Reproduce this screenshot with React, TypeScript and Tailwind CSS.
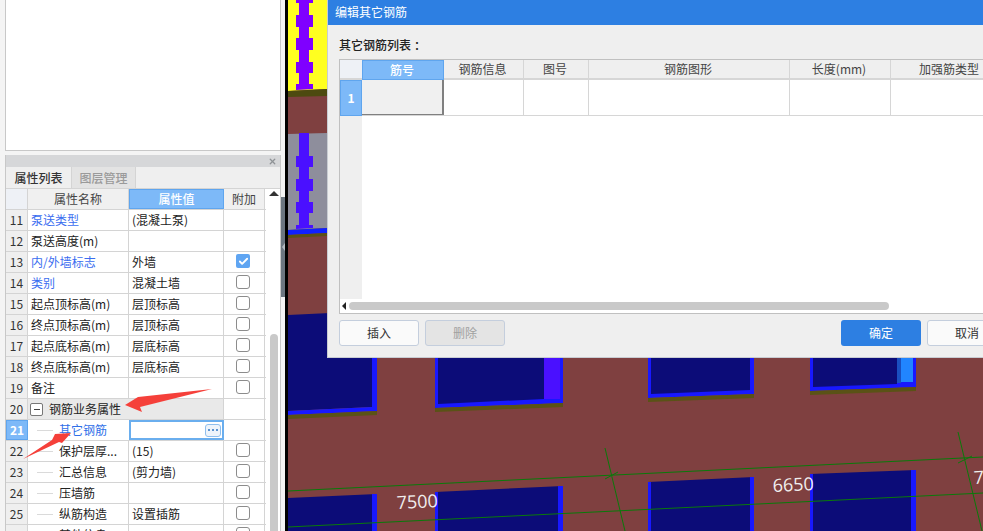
import { Check, X } from "lucide-react"

const font = "font-['Noto_Sans_CJK_SC','Liberation_Sans',sans-serif]"

type Row = {
  no: number
  name: string
  value?: string
  blue?: boolean
  check?: "on" | "off"
  child?: boolean
}

const rows: Row[] = [
  { no: 11, name: "泵送类型", value: "(混凝土泵)", blue: true },
  { no: 12, name: "泵送高度(m)" },
  { no: 13, name: "内/外墙标志", value: "外墙", blue: true, check: "on" },
  { no: 14, name: "类别", value: "混凝土墙", blue: true, check: "off" },
  { no: 15, name: "起点顶标高(m)", value: "层顶标高", check: "off" },
  { no: 16, name: "终点顶标高(m)", value: "层顶标高", check: "off" },
  { no: 17, name: "起点底标高(m)", value: "层底标高", check: "off" },
  { no: 18, name: "终点底标高(m)", value: "层底标高", check: "off" },
  { no: 19, name: "备注", check: "off" },
]

const childRows: Row[] = [
  { no: 22, name: "保护层厚...", value: "(15)", check: "off", child: true },
  { no: 23, name: "汇总信息", value: "(剪力墙)", check: "off", child: true },
  { no: 24, name: "压墙筋", check: "off", child: true },
  { no: 25, name: "纵筋构造", value: "设置插筋", check: "off", child: true },
  { no: 26, name: "其他信息", check: "off", child: true },
]

function CheckBox({ on }: { on?: boolean }) {
  if (on) {
    return (
      <span className="flex h-[14px] w-[14px] items-center justify-center rounded-[2px] bg-[#5fa5f2]">
        <Check size={11} strokeWidth={4} className="text-white" />
      </span>
    )
  }
  return <span className="block h-[14px] w-[14px] rounded-[3px] border border-[#8c8c8c] bg-white" />
}

function PropRow({ row }: { row: Row }) {
  return (
    <div className="flex h-[21px] shrink-0 border-b border-[#d4d4d4] text-[12px] leading-[20px]">
      <div className="w-[22px] shrink-0 border-r border-[#d4d4d4] bg-[#efefef] text-center text-[#333]">{row.no}</div>
      <div
        className={`flex w-[101px] shrink-0 items-center overflow-hidden whitespace-nowrap border-r border-[#d4d4d4] ${
          row.child ? "" : "pl-[3px]"
        } ${row.blue ? "text-[#3a6df0]" : "text-[#222]"}`}
      >
        {row.child && <span className="mr-[6px] ml-[9px] h-px w-[16px] shrink-0 bg-[#dadada]" />}
        {row.name}
      </div>
      <div className="w-[95px] shrink-0 border-r border-[#d4d4d4] pl-[3px] whitespace-nowrap text-[#222]">{row.value}</div>
      <div className="flex w-[41px] shrink-0 items-center justify-center border-r border-[#d4d4d4] pr-[2px] pb-[2px]">
        {row.check && <CheckBox on={row.check === "on"} />}
      </div>
    </div>
  )
}

function PropertyPanel() {
  return (
    <div className="relative flex h-full w-[285px] shrink-0 flex-col bg-[#f4f4f4] pl-[5px]">
      <div className="h-[151px] w-[276px] shrink-0 border border-t-0 border-[#c8c8c8] bg-white" />

      <div className="mt-[4px] flex w-[276px] min-h-0 flex-1 flex-col overflow-hidden border-x border-[#c8c8c8] bg-white">
        <div className="flex h-[12px] shrink-0 items-center justify-end bg-[#d6d7d9] pr-[3px] text-[#8f9296]">
          <X size={9} strokeWidth={3.5} />
        </div>
        <div className="flex h-[21px] shrink-0 bg-[#efefef] text-[12px] font-medium leading-[21px]">
          <div className="w-[65px] text-center text-[#333]">属性列表</div>
          <div className="w-[65px] border-x border-[#d4d4d4] bg-[#e3e3e3] text-center text-[#9a9a9a]">图层管理</div>
        </div>

        <div className="flex min-h-0 flex-1 border-t border-[#d4d4d4]">
          <div className="w-[260px] shrink-0">
            <div className="flex h-[21px] border-b border-[#d4d4d4] text-[12px] leading-[20px] text-[#444]">
              <div className="w-[22px] border-r border-[#d4d4d4] bg-[#eef1f6]" />
              <div className="w-[101px] border-r border-[#d4d4d4] bg-[#f0f0f0] text-center">属性名称</div>
              <div className="w-[95px] border border-[#5fa5ee] bg-[#7db9f8] text-center leading-[18px] font-medium text-white">属性值</div>
              <div className="w-[41px] border-r border-[#d4d4d4] bg-[#f0f0f0] text-center">附加</div>
            </div>

            {rows.map((row) => (
              <PropRow key={row.no} row={row} />
            ))}

            {/* 分组行 */}
            <div className="flex h-[21px] border-b border-[#d4d4d4] text-[12px] leading-[20px]">
              <div className="w-[22px] shrink-0 border-r border-[#d4d4d4] bg-[#efefef] text-center text-[#333]">20</div>
              <div className="flex w-[196px] shrink-0 items-center border-r border-[#d4d4d4] bg-[#e9e9e9] text-[#222]">
                <span className="mr-[6px] ml-[2px] flex h-[13px] w-[13px] items-center justify-center rounded-[2px] border border-[#777] bg-white">
                  <span className="h-px w-[6px] bg-[#444]" />
                </span>
                钢筋业务属性
              </div>
              <div className="w-[41px] shrink-0 border-r border-[#d4d4d4]" />
            </div>

            {/* 当前行 */}
            <div className="flex h-[21px] border-b border-[#d4d4d4] text-[12px] leading-[20px]">
              <div className="w-[22px] shrink-0 border border-[#5fa5ee] bg-[#7db9f8] text-center leading-[18px] font-bold text-white">21</div>
              <div className="flex w-[101px] shrink-0 items-center text-[#2f6fe8]">
                <span className="mr-[6px] ml-[9px] h-px w-[16px] shrink-0 bg-[#dadada]" />
                其它钢筋
              </div>
              <div className="flex w-[95px] shrink-0 items-center justify-end border-2 border-[#6aaeee] bg-white pr-[1px]">
                <span className="flex h-[13px] w-[16px] items-center justify-center gap-[2px] rounded-[3px] border border-[#8fbfee] bg-[#eef4fb]">
                  <span className="h-[2px] w-[2px] bg-[#5b93d0]" />
                  <span className="h-[2px] w-[2px] bg-[#5b93d0]" />
                  <span className="h-[2px] w-[2px] bg-[#5b93d0]" />
                </span>
              </div>
              <div className="w-[41px] shrink-0 border-r border-[#d4d4d4]" />
            </div>

            {childRows.map((row) => (
              <PropRow key={row.no} row={row} />
            ))}
          </div>

          {/* 滚动条 */}
          <div className="flex w-[14px] shrink-0 flex-col items-center pl-[2px]">
            <span className="mt-[2px] h-0 w-0 border-x-[5px] border-b-[5px] border-x-transparent border-b-[#333]" />
            <span className="mt-[138px] w-[8px] flex-1 rounded-t-[4px] bg-[#c9c9c9]" />
          </div>
        </div>
      </div>

      {/* 分隔条 */}
      <div className="absolute top-[197px] right-0 flex h-[100px] w-[4px] items-center justify-center bg-[#6c7680]">
        <span className="h-0 w-0 border-y-[4px] border-r-[3px] border-y-transparent border-r-[#b4bac0]" />
      </div>

      {/* 红色箭头 */}
      <svg className="absolute top-0 left-0 h-[531px] w-[285px]" viewBox="0 0 285 531">
        <polygon points="212,389 138,397 125,405 142,412 140,407" fill="#f5403a" />
        <polygon points="23,459 52,440 55,434 71,433 62,443 59,442" fill="#f5403a" />
      </svg>
    </div>
  )
}

function BuildingCanvas() {
  return (
    <svg className="absolute inset-0 h-full w-full" viewBox="288 0 695 531">
      <rect x="288" y="0" width="695" height="531" fill="#7f4040" />

      <polygon points="288,0 327,0 327,89 288,91" fill="#ffff20" />
      <polygon
        points="296,0 313,0 313,3 309,3 309,15 313,15 313,27 309,27 309,38 313,38 313,50 309,50 309,62 313,62 313,73 309,73 309,84 313,84 313,89 296,90 296,84 299,84 299,73 296,73 296,62 299,62 299,50 296,50 296,38 299,38 299,27 296,27 296,15 299,15 299,3 296,3"
        fill="#7f00ff"
      />
      <polygon points="288,91 327,89 327,96 288,97" fill="#4d4a10" />
      <polygon points="288,134 327,133 327,228 288,230" fill="#8e8e9c" />
      <polygon
        points="299,133 309,133 309,156 313,156 313,167 309,167 309,179 313,179 313,191 309,191 309,202 313,202 313,213 309,213 309,225 313,225 313,228 296,229 296,225 299,225 299,213 296,213 296,202 299,202 299,191 296,191 296,179 299,179 299,167 296,167 296,156 299,156"
        fill="#4a10ff"
      />
      <polygon points="288,230 327,228 327,233 288,235" fill="#1020ff" />
      <polygon points="288,235 327,233 327,236 288,238" fill="#5a5216" />

      {/* 上排窗 */}
      <polygon points="288,315 372,311 372,407 288,411" fill="#0c0c78" />
      <polygon points="372,300 377,300 377,411 288,415 288,411 372,407" fill="#1818ff" />
      <polygon points="288,415 377,411 377,415 288,419" fill="#5a5216" />

      <polygon points="435,300 563,300 563,403 435,408" fill="#1818ff" />
      <polygon points="438,300 544,300 544,399 438,404" fill="#0c0c78" />
      <rect x="544" y="300" width="16" height="99" fill="#4a10ff" />
      <polygon points="435,408 563,403 563,407 435,412" fill="#5a5216" />

      <polygon points="648,300 754,300 754,394 648,398" fill="#1818ff" />
      <polygon points="651,300 750,300 750,390 651,394" fill="#0c0c78" />
      <polygon points="648,398 754,394 754,398 648,402" fill="#5a5216" />

      <polygon points="810,300 916,300 916,387 810,391" fill="#1818ff" />
      <polygon points="813,300 897,300 897,384 813,387" fill="#0c0c78" />
      <rect x="897" y="300" width="4" height="83" fill="#1a4fc0" />
      <rect x="901" y="300" width="12" height="82" fill="#2185ff" />
      <polygon points="810,391 916,387 916,391 810,395" fill="#5a5216" />

      {/* 下排窗 */}
      <polygon points="288,498 377,494 377,531 288,531" fill="#0c0c78" />
      <polygon points="372,494 377,494 377,531 372,531" fill="#1818ff" />
      <polygon points="435,492 563,486 563,531 435,531" fill="#0c0c78" />
      <polygon points="435,492 438,492 438,531 435,531" fill="#1818ff" />
      <polygon points="558,486 563,486 563,531 558,531" fill="#1818ff" />
      <polygon points="648,482 754,477 754,531 648,531" fill="#0c0c78" />
      <polygon points="648,482 651,482 651,531 648,531" fill="#1818ff" />
      <polygon points="750,477 754,477 754,531 750,531" fill="#1818ff" />
      <polygon points="810,474 916,470 916,531 810,531" fill="#0c0c78" />
      <polygon points="810,474 813,474 813,531 810,531" fill="#1818ff" />
      <polygon points="911,470 916,470 916,531 911,531" fill="#1818ff" />

      {/* 轴线 */}
      <g stroke="#0a7a0a" strokeWidth="1" fill="none">
        <line x1="288" y1="491" x2="983" y2="457" />
        <line x1="288" y1="527" x2="983" y2="493" />
        <line x1="605" y1="448" x2="625" y2="531" />
        <line x1="958" y1="432" x2="982" y2="531" />
        <line x1="605" y1="479" x2="618" y2="472" />
        <line x1="958" y1="463" x2="972" y2="456" />
      </g>

      <g fill="#f0eeee" fontFamily="'Open Sans', sans-serif" fontSize="18">
        <text x="397" y="509" transform="rotate(-2.8 397 509)">7500</text>
        <text x="773" y="492" transform="rotate(-2.8 773 492)">6650</text>
        <text x="974" y="484" transform="rotate(-2.8 974 484)">7</text>
      </g>
    </svg>
  )
}

const columns = [
  { title: "筋号", width: "w-[82px]" },
  { title: "钢筋信息", width: "w-[80px]" },
  { title: "图号", width: "w-[65px]" },
  { title: "钢筋图形", width: "w-[201px]" },
  { title: "长度(mm)", width: "w-[101px]" },
  { title: "加强筋类型", width: "w-[119px]" },
]

function EditDialog() {
  return (
    <div className="absolute top-0 left-[39px] flex h-[358px] w-[700px] flex-col border-b border-l border-[#c8ccd2] bg-[#efefef]">
      <div className="h-[25px] shrink-0 bg-[#2d7fe2] pl-[7px] text-[12px] leading-[24px] text-white">编辑其它钢筋</div>

      <div className="flex min-h-0 flex-1 flex-col pl-[11px]">
        <div className="mt-[11px] h-[23px] text-[12px] leading-[18px] font-medium text-[#222]">
          其它钢筋列表<span className="ml-[3px]">：</span>
        </div>

        <div className="flex h-[255px] flex-col border border-[#c0c0c0] bg-white">
          {/* 表头 */}
          <div className="flex h-[20px] shrink-0 bg-[#efefef] text-[12px] leading-[18px] text-[#444]">
            <div className="w-[22px] shrink-0 border-b-2 border-[#d6d6d6] bg-[#eef1f6]" />
            {columns.map((col, i) =>
              i === 0 ? (
                <div key={col.title} className={`${col.width} shrink-0 border border-[#5fa5ee] bg-[#7db9f8] pr-[2px] text-center leading-[17px] font-medium text-white`}>
                  {col.title}
                </div>
              ) : (
                <div key={col.title} className={`${col.width} shrink-0 border-r border-b-2 border-[#d6d6d6] pr-[2px] text-center`}>
                  {col.title}
                </div>
              ),
            )}
          </div>

          {/* 数据行 */}
          <div className="flex min-h-0 flex-1">
            <div className="w-[22px] shrink-0 bg-[#efefef]">
              <div className="h-[36px] border border-[#5fa5ee] bg-[#7db9f8] text-center text-[12px] leading-[34px] font-bold text-white">1</div>
            </div>
            <div className="flex h-[36px] border-b border-[#d6d6d6]">
              <div className="w-[82px] shrink-0 border-r-2 border-b border-[#808080] bg-[#f0f0f0]" />
              <div className="w-[80px] shrink-0 border-r border-[#d6d6d6]" />
              <div className="w-[65px] shrink-0 border-r border-[#d6d6d6]" />
              <div className="w-[201px] shrink-0 border-r border-[#d6d6d6]" />
              <div className="w-[101px] shrink-0 border-r border-[#d6d6d6]" />
              <div className="w-[119px] shrink-0" />
            </div>
          </div>

          {/* 横向滚动条 */}
          <div className="flex h-[14px] shrink-0 items-center pl-[2px]">
            <span className="h-0 w-0 border-y-[4px] border-r-[4px] border-y-transparent border-r-[#222]" />
            <span className="ml-[3px] h-[8px] w-[540px] rounded-[4px] bg-[#c9c9c9]" />
          </div>
        </div>

        <div className="mt-[6px] flex gap-[6px] text-[12px]">
          <button className="h-[26px] w-[80px] shrink-0 rounded-[3px] border border-[#c4cedd] bg-[#fafafa] text-[#333]">插入</button>
          <button className="h-[26px] w-[80px] shrink-0 rounded-[3px] border border-[#c4cedd] bg-[#e4e4e4] text-[#a0a0a0]">删除</button>
          <button className="ml-[330px] h-[26px] w-[80px] shrink-0 rounded-[3px] bg-[#2d7fe2] text-white">确定</button>
          <button className="h-[26px] w-[80px] shrink-0 rounded-[3px] border border-[#c4cedd] bg-[#fafafa] text-[#333]">取消</button>
        </div>
      </div>
    </div>
  )
}

export default function App() {
  return (
    <div className={`flex h-[531px] w-[983px] overflow-hidden ${font}`}>
      <PropertyPanel />
      <div className="w-[3px] shrink-0 bg-black" />
      <div className="relative min-w-0 flex-1 overflow-hidden">
        <BuildingCanvas />
        <EditDialog />
      </div>
    </div>
  )
}
